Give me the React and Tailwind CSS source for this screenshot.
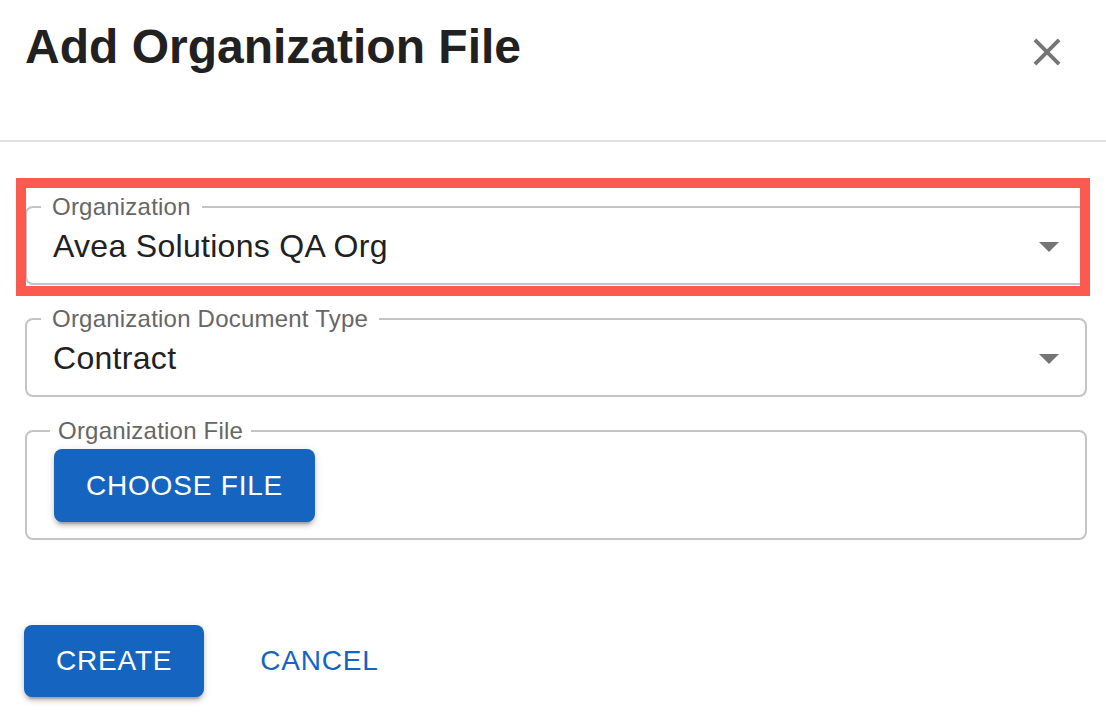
const font = "font-['Liberation_Sans',Arial,Helvetica,sans-serif]";

function ArrowDropDown() {
  return (
    <svg width="48" height="48" viewBox="0 0 24 24" className="shrink-0">
      <path d="M7 10l5 5 5-5z" fill="#757575" />
    </svg>
  );
}

function SelectField({ label, value }) {
  return (
    <fieldset className="m-0 rounded-lg border-2 border-[#c4c4c4] p-0">
      <legend className="ml-[14px] px-[11px] text-[24px] leading-[24px] tracking-[0.22px] text-[#666666]">
        {label}
      </legend>
      <div className="mt-[4px] mb-[14px] flex h-[46px] items-center justify-between pl-[26px] pr-[12px]">
        <span className="text-[32px] leading-[46px] tracking-[0.3px] text-[#212121]">{value}</span>
        <ArrowDropDown />
      </div>
    </fieldset>
  );
}

export default function App() {
  return (
    <div className={`min-h-screen w-full bg-white ${font}`}>
      {/* Dialog header */}
      <header className="flex h-[142px] items-start justify-between border-b-2 border-[#e0e0e0] pl-[25px] pr-[36px]">
        <h1 className="pt-[19px] text-[48px] font-bold leading-[56px] text-[#212121]">
          Add Organization File
        </h1>
        <button className="mt-[29px]" aria-label="close">
          <svg width="46" height="46" viewBox="0 0 24 24">
            <path
              d="M19 6.41 17.59 5 12 10.59 6.41 5 5 6.41 10.59 12 5 17.59 6.41 19 12 13.41 17.59 19 19 17.59 13.41 12z"
              fill="#757575"
            />
          </svg>
        </button>
      </header>

      {/* Form body */}
      <div className="flex flex-col gap-[22px] pl-[25px] pr-[19px] pt-[53px]">
        <div className="relative">
          <SelectField label="Organization" value="Avea Solutions QA Org" />
          {/* highlight annotation */}
          <div className="pointer-events-none absolute -top-[17px] -left-[9px] -right-[3px] -bottom-[11px] border-[10px] border-[#fd5a4f]" />
        </div>

        <SelectField label="Organization Document Type" value="Contract" />

        <fieldset className="m-0 rounded-lg border-2 border-[#c4c4c4] p-0">
          <legend className="ml-[23px] px-[8px] text-[24px] leading-[24px] tracking-[0.22px] text-[#666666]">
            Organization File
          </legend>
          <div className="pt-[6px] pb-[16px] pl-[27px]">
            <button className="h-[73px] rounded-lg bg-[#1565c0] px-[32px] text-[28px] uppercase leading-[49px] tracking-[0.8px] text-white shadow-[0px_6px_2px_-4px_rgba(0,0,0,0.2),0px_4px_4px_0px_rgba(0,0,0,0.14),0px_2px_10px_0px_rgba(0,0,0,0.12)]">
              Choose File
            </button>
          </div>
        </fieldset>
      </div>

      {/* Actions */}
      <div className="mt-[85px] flex items-center pl-[24px]">
        <button className="h-[72px] rounded-lg bg-[#1565c0] px-[32px] text-[28px] uppercase leading-[48px] tracking-[0.8px] text-white shadow-[0px_6px_2px_-4px_rgba(0,0,0,0.2),0px_4px_4px_0px_rgba(0,0,0,0.14),0px_2px_10px_0px_rgba(0,0,0,0.12)]">
          Create
        </button>
        <button className="ml-[40px] h-[72px] rounded-lg px-[16px] text-[28px] uppercase leading-[48px] tracking-[0.8px] text-[#1565c0]">
          Cancel
        </button>
      </div>
    </div>
  );
}
